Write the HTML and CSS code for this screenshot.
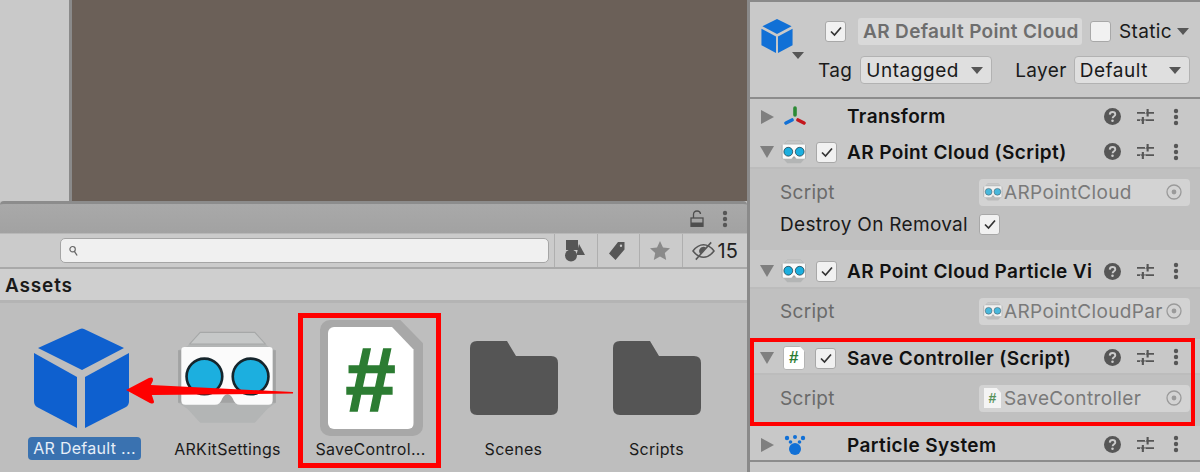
FILE: index.html
```html
<!DOCTYPE html>
<html lang="en">
<head>
<meta charset="utf-8">
<title>Unity Editor</title>
<link rel="stylesheet" href="styles.css">
</head>
<body>
<svg class="defs" width="0" height="0" aria-hidden="true">
  <defs>
    <symbol id="goggles" viewBox="0 0 100 100">
      <path d="M24 7H76L88 20L96 24V74L88 80L76 93H24L12 80L3 74V24L12 20Z" fill="#b3b5b5"/>
      <path d="M3 24H96V74H3Z" fill="#a2a3a3"/>
      <path d="M24 7H76L86 18H14Z" fill="#c6c8c8" stroke="#a6a8a8" stroke-width="1"/>
      <path d="M6 24Q6 21 9 21H90Q93 21 93 24V72Q93 76 89 76H62Q57 76 55 70Q50 62 45 70Q43 76 38 76H10Q6 76 6 72Z" fill="#fbfbfb"/>
      <circle cx="28" cy="49" r="17" fill="#1cafdf" stroke="#15252c" stroke-width="2.500"/>
      <circle cx="72" cy="49" r="17" fill="#1cafdf" stroke="#15252c" stroke-width="2.500"/>
    </symbol>
    <symbol id="help" viewBox="0 0 16 16">
      <circle cx="8" cy="8" r="8" fill="#565656"/>
      <path d="M5.400 6.200C5.500 4.600 6.600 3.800 8 3.800C9.500 3.800 10.600 4.700 10.600 6C10.600 7.700 8.200 7.700 8.100 9.600" fill="none" stroke="#cbcbcb" stroke-width="1.800"/>
      <circle cx="8" cy="12" r="1.200" fill="#cbcbcb"/>
    </symbol>
    <symbol id="sliders" viewBox="0 0 16 16">
      <path d="M0 4.500H16M0 11.500H16" stroke="#565656" stroke-width="1.600"/>
      <path d="M10 1V8M5.500 8.500V15" stroke="#565656" stroke-width="2"/>
      <path d="M7.500 4.500H8.700M3 11.500H4M7 11.500H8" stroke="#cbcbcb" stroke-width="1.400"/>
    </symbol>
    <symbol id="dots" viewBox="0 0 6 18">
      <circle cx="3" cy="3" r="2.200" fill="#565656"/>
      <circle cx="3" cy="9" r="2.200" fill="#565656"/>
      <circle cx="3" cy="15" r="2.200" fill="#565656"/>
    </symbol>
    <symbol id="target" viewBox="0 0 16 16">
      <circle cx="8" cy="8" r="7" fill="none" stroke="#9a9a9a" stroke-width="1.300"/>
      <circle cx="8" cy="8" r="2.400" fill="#9a9a9a"/>
    </symbol>
    <symbol id="check" viewBox="0 0 14 14">
      <path d="M2 7.500L5.500 11L12 3.500" fill="none" stroke="#333" stroke-width="1.700"/>
    </symbol>
    <symbol id="folder" viewBox="0 0 88 74">
      <path d="M7 0H37L46 15H81Q88 15 88 22V67Q88 74 81 74H7Q0 74 0 67V7Q0 0 7 0Z" fill="#555"/>
    </symbol>
  </defs>
</svg>

<main class="left">
  <section class="scene">
    <div class="gutter"></div>
    <div class="viewport"></div>
  </section>
  <div class="tabbar">
    <svg class="lock" viewBox="0 0 14 17" aria-hidden="true"><path d="M3.500 8V4.500Q3.500 1 7 1Q10.300 1 10.500 4" fill="none" stroke="#4e4e4e" stroke-width="1.300"/><rect x="1" y="8" width="12" height="8.300" fill="none" stroke="#4e4e4e" stroke-width="1.300"/><rect x="1" y="12.500" width="12" height="4" fill="#4e4e4e"/></svg>
    <svg class="tabdots" aria-hidden="true"><use href="#dots"/></svg>
  </div>
  <div class="toolbar">
    <div class="search">
      <svg class="mag" viewBox="0 0 10 12" aria-hidden="true"><circle cx="4" cy="4" r="3" fill="none" stroke="#666" stroke-width="1.300"/><path d="M6 6.500L9 11" stroke="#666" stroke-width="1.500"/></svg>
    </div>
    <div class="tool">
      <svg class="t1" viewBox="0 0 20 22" aria-hidden="true"><rect x="1" y="0" width="12" height="10" fill="#565656"/><circle cx="6" cy="15.500" r="6" fill="#565656"/><path d="M14 4L20 15H11.500Z" fill="#565656"/></svg>
    </div>
    <div class="tool">
      <svg class="t2" viewBox="0 0 18 20" aria-hidden="true"><path fill-rule="evenodd" d="M10 1H16.500V8.500L7.500 19L1 12.500ZM13 3.500A1.200 1.200 0 1 0 13 5.900A1.200 1.200 0 1 0 13 3.500Z" fill="#565656"/></svg>
    </div>
    <div class="tool">
      <svg class="t3" viewBox="0 0 20 19" aria-hidden="true"><path d="M10 0L13 6.500L20 7.200L14.800 12L16.200 19L10 15.500L3.800 19L5.200 12L0 7.200L7 6.500Z" fill="#8a8a8a"/></svg>
    </div>
    <div class="tool wide">
      <svg class="t4" viewBox="0 0 24 20" aria-hidden="true"><path d="M1 10Q6 3.500 12 3.500Q18 3.500 23 10Q18 16.500 12 16.500Q6 16.500 1 10Z" fill="none" stroke="#565656" stroke-width="1.500"/><path d="M12 5.500A4.500 4.500 0 0 0 9 13.400L14.500 6.300Q13.500 5.500 12 5.500Z" fill="#565656"/><path d="M4 19L20 1" stroke="#565656" stroke-width="1.600"/></svg>
      <span>15</span>
    </div>
  </div>
  <div class="crumb">Assets</div>
  <div class="grid">
    <figure class="asset">
      <svg class="cube" viewBox="0 0 95 100" aria-hidden="true">
        <path d="M46 1Q48 0 50 1L90 20L48 42L4 20Z" fill="#0e60cf"/>
        <path d="M0 25L43 49V100L3 79Q0 77 0 73Z" fill="#0e60cf"/>
        <path d="M95 25V73Q95 77 92 79L51 100V49Z" fill="#0e60cf"/>
      </svg>
      <figcaption class="selected">AR Default ...</figcaption>
    </figure>
    <figure class="asset">
      <svg class="goggle-big" aria-hidden="true"><use href="#goggles"/></svg>
      <figcaption>ARKitSettings</figcaption>
    </figure>
    <figure class="asset file-asset">
      <div class="scriptfile big"><span>#</span></div>
      <figcaption>SaveControl...</figcaption>
    </figure>
    <figure class="asset">
      <svg class="folder" aria-hidden="true"><use href="#folder"/></svg>
      <figcaption>Scenes</figcaption>
    </figure>
    <figure class="asset">
      <svg class="folder" aria-hidden="true"><use href="#folder"/></svg>
      <figcaption>Scripts</figcaption>
    </figure>
  </div>
  <div class="redbox asset-box"></div>
  <svg class="arrow" viewBox="0 0 170 36" aria-hidden="true">
    <path d="M0 16L23 4Q28 2 27 7L25 11L168 18V19.500L26 21L28 27Q29 31 24 29Z" fill="#f00"/>
  </svg>
</main>

<aside class="inspector">
  <header class="head">
    <div class="head-icon">
      <svg class="mini-cube" viewBox="0 0 32 36" aria-hidden="true">
        <path d="M16 0L31 7.500L16 15.500L1 7.500Z" fill="#1170d6"/>
        <path d="M0 10L15 18V35L0 27Z" fill="#1170d6"/>
        <path d="M32 10L17 18V35L32 27Z" fill="#1170d6"/>
      </svg>
      <i class="caret small"></i>
    </div>
    <div class="head-rows">
      <div class="hrow">
        <span class="cb"><svg aria-hidden="true"><use href="#check"/></svg></span>
        <span class="name">AR Default Point Cloud</span>
        <span class="cb empty"></span>
        <span class="static">Static</span>
        <i class="caret"></i>
      </div>
      <div class="hrow second">
        <span class="lbl">Tag</span>
        <span class="drop tag">Untagged<i class="caret"></i></span>
        <span class="lbl layer">Layer</span>
        <span class="drop lay">Default<i class="caret"></i></span>
      </div>
    </div>
  </header>

  <div class="comp-head first">
    <i class="tri right"></i>
    <svg class="cicon" viewBox="0 0 22 22" aria-hidden="true">
      <path d="M11 2V9" stroke="#2c8a35" stroke-width="3.600" stroke-linecap="round"/>
      <path d="M8 14L2 17" stroke="#1170d6" stroke-width="3.600" stroke-linecap="round"/>
      <path d="M14 14L20 17" stroke="#c4161c" stroke-width="3.600" stroke-linecap="round"/>
    </svg>
    <span class="slot"></span>
    <b>Transform</b>
    <span class="acts"><svg class="a1"><use href="#help"/></svg><svg class="a2"><use href="#sliders"/></svg><svg class="a3"><use href="#dots"/></svg></span>
  </div>

  <div class="comp-head line h1">
    <i class="tri"></i>
    <svg class="gog" aria-hidden="true"><use href="#goggles"/></svg>
    <span class="cb"><svg aria-hidden="true"><use href="#check"/></svg></span>
    <b>AR Point Cloud (Script)</b>
    <span class="acts"><svg class="a1"><use href="#help"/></svg><svg class="a2"><use href="#sliders"/></svg><svg class="a3"><use href="#dots"/></svg></span>
  </div>
  <div class="comp-body b1">
    <div class="prop">
      <span class="plabel dim">Script</span>
      <span class="field"><svg class="ficon" aria-hidden="true"><use href="#goggles"/></svg><span class="ftext">ARPointCloud</span><svg class="ftarget" aria-hidden="true"><use href="#target"/></svg></span>
    </div>
    <div class="prop">
      <span class="plabel">Destroy On Removal</span>
      <span class="cb tiny"><svg aria-hidden="true"><use href="#check"/></svg></span>
    </div>
  </div>

  <div class="comp-head line h2">
    <i class="tri"></i>
    <svg class="gog" aria-hidden="true"><use href="#goggles"/></svg>
    <span class="cb"><svg aria-hidden="true"><use href="#check"/></svg></span>
    <b>AR Point Cloud Particle Vi</b>
    <span class="acts"><svg class="a1"><use href="#help"/></svg><svg class="a2"><use href="#sliders"/></svg><svg class="a3"><use href="#dots"/></svg></span>
  </div>
  <div class="comp-body b2">
    <div class="prop">
      <span class="plabel dim">Script</span>
      <span class="field"><svg class="ficon" aria-hidden="true"><use href="#goggles"/></svg><span class="ftext">ARPointCloudPar</span><svg class="ftarget" aria-hidden="true"><use href="#target"/></svg></span>
    </div>
  </div>

  <div class="comp-head line h3">
    <i class="tri"></i>
    <span class="scriptfile small"><span>#</span></span>
    <span class="cb"><svg aria-hidden="true"><use href="#check"/></svg></span>
    <b>Save Controller (Script)</b>
    <span class="acts"><svg class="a1"><use href="#help"/></svg><svg class="a2"><use href="#sliders"/></svg><svg class="a3"><use href="#dots"/></svg></span>
  </div>
  <div class="comp-body b3">
    <div class="prop">
      <span class="plabel dim">Script</span>
      <span class="field"><span class="scriptfile tinyfile"><span>#</span></span><span class="ftext">SaveController</span><svg class="ftarget" aria-hidden="true"><use href="#target"/></svg></span>
    </div>
  </div>

  <div class="comp-head last">
    <i class="tri right"></i>
    <svg class="cicon" viewBox="0 0 22 22" aria-hidden="true">
      <circle cx="11" cy="15" r="6" fill="#1170d6"/>
      <circle cx="3" cy="4" r="2.200" fill="#1170d6"/><circle cx="11" cy="3" r="2" fill="#1170d6"/><circle cx="19" cy="4" r="2.200" fill="#1170d6"/>
      <circle cx="6.500" cy="8" r="1.800" fill="#1170d6"/><circle cx="15.500" cy="8" r="1.800" fill="#1170d6"/>
    </svg>
    <span class="slot"></span>
    <b>Particle System</b>
    <span class="acts"><svg class="a1"><use href="#help"/></svg><svg class="a2"><use href="#sliders"/></svg><svg class="a3"><use href="#dots"/></svg></span>
  </div>
  <div class="tail"></div>
  <div class="redbox comp-box"></div>
</aside>
</body>
</html>
```

FILE: styles.css
```css
* { box-sizing: border-box; }
html, body { margin: 0; height: 472px; overflow: hidden; }
body {
  display: flex;
  width: 1200px;
  background: #c0c0c0;
  font-family: Inter, "Noto Sans", "Liberation Sans", sans-serif;
  color: #111;
}
.defs { position: absolute; }
.left {
  position: relative;
  width: 747px;
  height: 472px;
  display: flex;
  flex-direction: column;
  flex: none;
}
.scene { display: flex; height: 201px; flex: none; }
.gutter { width: 69px; background: #c9c9c9; }
.viewport { flex: 1; background: #6b6058; border-left: 3px solid #8a8a8a; }
.tabbar {
  height: 33px;
  flex: none;
  background: linear-gradient(#a9a9a9, #a2a2a2);
  border-top: 3px solid #8c8c8c;
  border-bottom: 1px solid #b8b8b8;
  border-radius: 4px 4px 0 0;
  display: flex;
  align-items: center;
  justify-content: flex-end;
  padding-right: 19px;
  gap: 18px;
}
.lock { width: 14px; height: 17px; }
.tabdots { width: 6px; height: 18px; }
.toolbar {
  height: 35px;
  flex: none;
  background: #cbcbcb;
  border-bottom: 2px solid #a9a9a9;
  display: flex;
  align-items: center;
}
.search {
  margin-left: 60px;
  width: 489px;
  height: 25px;
  margin-right: 5px;
  background: #f0f0f0;
  border: 1px solid #a5a5a5;
  border-radius: 5px;
  display: flex;
  align-items: center;
  padding-left: 8px;
}
.mag { width: 9px; height: 12px; }
.tool {
  width: 42.500px;
  height: 33px;
  border-left: 1px solid #afafaf;
  display: flex;
  align-items: center;
  justify-content: center;
  flex: none;
}
.tool.wide { width: 65.500px; justify-content: flex-start; padding-left: 9px; gap: 3px; font-size: 20px; color: #222; }
.t1 { width: 20px; height: 22px; margin-right: 2px; }
.t2 { width: 18px; height: 20px; margin-right: 3px; }
.t3 { width: 20px; height: 19px; margin-right: 2px; }
.t4 { width: 23px; height: 20px; flex: none; }
.crumb {
  height: 34px;
  flex: none;
  background: #cfcfcf;
  border-bottom: 3px solid #b4b4b4;
  font-size: 19px;
  letter-spacing: .85px;
  font-weight: 600;
  padding: 5px 0 0 5px;
  color: #1a1a1a;
}
.grid {
  flex: 1;
  background: #bebebe;
  display: flex;
  padding-left: 13px;
}
.asset {
  margin: 0;
  width: 143px;
  flex: none;
  position: relative;
  display: flex;
  flex-direction: column;
  align-items: center;
}
figcaption {
  position: absolute;
  top: 134px;
  font-size: 16px;
  letter-spacing: .3px;
  line-height: 24px;
  white-space: nowrap;
  color: #1a1a1a;
}
.selected {
  background: #3a72b0;
  color: #e6eef8;
  border-radius: 4px;
  padding: 0 5px;
  height: 23px;
  line-height: 23px;
}
.cube { width: 95px; height: 100px; margin: 25px 6px 0 0; }
.goggle-big { width: 105px; height: 105px; margin-top: 22px; }
.folder { width: 88px; height: 74px; margin-top: 38px; }
.scriptfile {
  background: #fff;
  display: flex;
  align-items: center;
  justify-content: center;
  color: #2c7c32;
  font-weight: 700;
  font-family: "Liberation Sans", sans-serif;
}
.file-asset::before {
  content: "";
  position: absolute;
  left: 21px;
  top: 17px;
  width: 103px;
  height: 116px;
  border-radius: 10px;
  background: #a8a8a8;
  clip-path: polygon(0 0, 78% 0, 100% 20%, 100% 100%, 0 100%);
}
.scriptfile.big {
  position: relative;
  width: 86px;
  height: 102px;
  margin-top: 24px;
  padding-top: 5px;
  border-radius: 6px;
  font-size: 90px;
  -webkit-text-stroke: 1.500px #2c7c32;
  clip-path: polygon(0 0, 75% 0, 100% 22%, 100% 100%, 0 100%);
}
.redbox { position: absolute; border: 4px solid #f00; pointer-events: none; }
.asset-box { left: 298px; top: 313px; width: 143px; height: 155px; border-width: 5px; }
.arrow { position: absolute; left: 126px; top: 374px; width: 169px; height: 36px; }

.inspector {
  position: relative;
  flex: 1;
  height: 472px;
  background: #c8c8c8;
  border-left: 3px solid #8a8a8a;
  border-top: 2px solid #8a8a8a;
  display: flex;
  flex-direction: column;
}
.head {
  height: 97px;
  flex: none;
  border-bottom: 2px solid #8c8c8c;
  background: #c9c9c9;
  display: flex;
  padding: 17px 0 0 11px;
}
.head-icon { width: 64px; position: relative; }
.mini-cube { width: 32px; height: 35px; }
.caret {
  display: inline-block;
  width: 0; height: 0;
  border-left: 6px solid transparent;
  border-right: 6px solid transparent;
  border-top: 7px solid #565656;
  flex: none;
}
.caret.small { position: absolute; left: 31px; top: 33px; }
.head-rows { flex: 1; display: flex; flex-direction: column; gap: 15px; }
.hrow { display: flex; align-items: center; height: 24px; font-size: 19px; letter-spacing: .35px; color: #1a1a1a; }
.cb {
  width: 21px; height: 21px;
  background: #f1f1f1;
  border: 1px solid #a8a8a8;
  border-radius: 3px;
  display: flex;
  align-items: center;
  justify-content: center;
  flex: none;
}
.cb svg { width: 14px; height: 14px; }
.name {
  margin-left: 12px;
  width: 224px;
  height: 27px;
  line-height: 27px;
  background: #d9d9d9;
  border-radius: 3px;
  color: #6e6e6e;
  font-weight: 600;
  padding-left: 5px;
  white-space: nowrap;
  overflow: hidden;
}
.cb.empty { margin-left: 8px; }
.static { margin-left: 8px; }
.hrow > .caret { margin-left: 5px; }
.second { margin-left: -7px; }
.drop {
  display: flex;
  align-items: center;
  justify-content: space-between;
  height: 28px;
  background: #dfdfdf;
  border: 1px solid #b2b2b2;
  border-radius: 4px;
  padding: 0 8px 0 5px;
  letter-spacing: .55px;
  margin-left: 8px;
}
.tag { width: 132px; }
.lay { width: 116px; padding-right: 8px; margin-left: 7px; }
.layer { margin-left: 23px; }
.comp-head {
  height: 35px;
  flex: none;
  display: flex;
  align-items: center;
  padding-left: 10px;
  font-size: 19px;
  letter-spacing: .4px;
  position: relative;
}
.comp-head b { font-weight: 600; white-space: nowrap; color: #111; }
.comp-head.line { border-bottom: 2px solid #bcbcbc; }
.h1 { padding-top: 3px; }
.h2 { height: 36px; padding-top: 2px; }
.h3 { height: 36px; padding-top: 4px; }
.comp-head.last { height: 36px; padding-top: 4px; border-bottom: 2px solid #8c8c8c; }
.tri {
  width: 0; height: 0;
  border-left: 7px solid transparent;
  border-right: 7px solid transparent;
  border-top: 12px solid #7f7f7f;
  flex: none;
  margin-right: 7px;
}
.tri.right {
  border-top: 7px solid transparent;
  border-bottom: 7px solid transparent;
  border-left: 13px solid #7f7f7f;
  border-right: 0;
  margin-left: 1px;
  margin-right: 7px;
}
.cicon { width: 22px; height: 22px; flex: none; margin-left: 3px; }
.slot { width: 41px; flex: none; }
.gog { width: 26px; height: 26px; flex: none; }
.comp-head > .cb { margin-left: 9px; }
.comp-head > .cb + b { margin-left: 10px; }
.h3 > .cb { margin-left: 10px; }
.h3 > .cb + b { margin-left: 11px; }
.acts { position: absolute; left: 354px; top: 0; bottom: 0; display: flex; align-items: center; }
.h1 .acts, .h2 .acts, .h3 .acts, .last .acts { top: 2px; }
.a1 { width: 17px; height: 17px; margin-right: 16px; }
.a2 { width: 17px; height: 17px; margin-right: 19px; }
.a3 { width: 6px; height: 18px; }
.comp-body { background: #c0c0c0; flex: none; padding: 7px 0 0 30px; }
.b1 { height: 84px; border-bottom: 3px solid #c8c8c8; }
.b2 { height: 50px; padding-top: 6px; }
.b3 { height: 51px; }
.prop { display: flex; align-items: center; height: 32px; font-size: 19px; letter-spacing: .3px; }
.plabel { width: 199px; flex: none; color: #1a1a1a; }
.plabel.dim { color: #6a6a6a; }
.field {
  width: 211px;
  height: 27px;
  background: #d3d3d3;
  border-radius: 4px;
  display: flex;
  align-items: center;
  padding-left: 4px;
  color: #7a7a7a;
  letter-spacing: .35px;
  position: relative;
}
.ficon { width: 20px; height: 20px; opacity: .75; flex: none; }
.ftext { white-space: nowrap; margin-left: 1px; }
.ftarget { position: absolute; right: 8px; top: 5px; width: 16px; height: 16px; }
.scriptfile.small {
  width: 22px;
  height: 24px;
  font-size: 17px;
  border-radius: 3px;
  margin-left: 2px;
  flex: none;
  border: 1px solid #b4b4b4;
  clip-path: polygon(0 0, 75% 0, 100% 24%, 100% 100%, 0 100%);
}
.scriptfile.tinyfile {
  width: 17px;
  height: 20px;
  font-size: 14px;
  margin: 0 2px 0 1px;
  opacity: .75;
  flex: none;
  clip-path: polygon(0 0, 75% 0, 100% 24%, 100% 100%, 0 100%);
}
.tail { flex: 1; background: #c8c8c8; }
.comp-box { left: 0; top: 336px; width: 445px; height: 88px; }
```
